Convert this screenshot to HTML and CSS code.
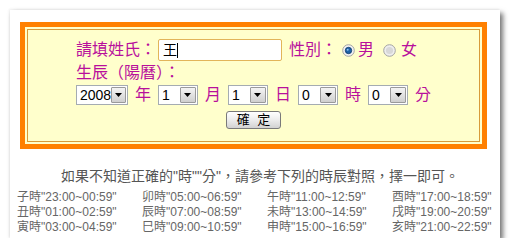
FILE: index.html
```html
<!DOCTYPE html>
<html lang="zh-Hant">
<head>
    <meta charset="UTF-8">
    <title>生辰查詢</title>
    <link rel="stylesheet" href="styles.css">
</head>
<body>

    <div class="card">

        <!-- Form Section -->
        <div class="frame">
            <div class="panel">
                <div class="form">
                    <div class="row">
                        <span class="lbl">請填姓氏：</span>
                        <span class="field">王<i class="caret"></i></span>
                        <span class="lbl sex">性別：</span>
                        <svg class="radio" width="13" height="13" viewBox="0 0 13 13">
                            <circle cx="6.5" cy="6.5" r="5.8" fill="#f2f2f2" stroke="#a3a3a3"/>
                            <circle cx="6.5" cy="6.5" r="3.2" fill="#1e62a8" stroke="#0b3665" stroke-width="0.8"/>
                            <circle cx="5.7" cy="5.7" r="1" fill="#8fc4f0"/>
                        </svg>
                        <span class="lbl opt">男</span>
                        <svg class="radio second" width="13" height="13" viewBox="0 0 13 13">
                            <circle cx="6.5" cy="6.5" r="5.8" fill="#eeeeee" stroke="#a3a3a3"/>
                            <circle cx="6.5" cy="6.5" r="3.6" fill="#d8d8d8"/>
                        </svg>
                        <span class="lbl opt">女</span>
                    </div>
                    <div class="row">生辰（陽曆）：</div>
                    <div class="row dates">
                        <span class="select w-year"><span class="val">2008</span><span class="drop"><svg width="7" height="4" viewBox="0 0 7 4"><path d="M0 0h7L3.5 4z" fill="#000"/></svg></span></span>
                        <span>年</span>
                        <span class="select"><span class="val">1</span><span class="drop"><svg width="7" height="4" viewBox="0 0 7 4"><path d="M0 0h7L3.5 4z" fill="#000"/></svg></span></span>
                        <span>月</span>
                        <span class="select"><span class="val">1</span><span class="drop"><svg width="7" height="4" viewBox="0 0 7 4"><path d="M0 0h7L3.5 4z" fill="#000"/></svg></span></span>
                        <span>日</span>
                        <span class="select"><span class="val">0</span><span class="drop"><svg width="7" height="4" viewBox="0 0 7 4"><path d="M0 0h7L3.5 4z" fill="#000"/></svg></span></span>
                        <span>時</span>
                        <span class="select"><span class="val">0</span><span class="drop"><svg width="7" height="4" viewBox="0 0 7 4"><path d="M0 0h7L3.5 4z" fill="#000"/></svg></span></span>
                        <span>分</span>
                    </div>
                    <div class="row submit">
                        <button class="ok-btn">確 定</button>
                    </div>
                </div>
            </div>
        </div>

        <p class="note">如果不知道正確的"時""分"，請參考下列的時辰對照，擇一即可。</p>

        <!-- Hours Table -->
        <div class="hours">
            <span>子時"23:00~00:59"</span>
            <span>卯時"05:00~06:59"</span>
            <span>午時"11:00~12:59"</span>
            <span>酉時"17:00~18:59"</span>
            <span>丑時"01:00~02:59"</span>
            <span>辰時"07:00~08:59"</span>
            <span>未時"13:00~14:59"</span>
            <span>戌時"19:00~20:59"</span>
            <span>寅時"03:00~04:59"</span>
            <span>巳時"09:00~10:59"</span>
            <span>申時"15:00~16:59"</span>
            <span>亥時"21:00~22:59"</span>
        </div>
    </div>

</body>
</html>
```

FILE: styles.css
```css
* {
    box-sizing: border-box;
}
body {
    margin: 0;
    background-color: #fff;
    font-family: "Liberation Sans", "Noto Sans CJK TC", sans-serif;
}
.card {
    margin: 10px 0 0 10px;
    width: 490px;
    height: 228px;
    overflow: hidden;
    background-color: #fff;
    box-shadow: 3px 3px 5px rgba(0, 0, 0, 0.55), -1px -1px 2px rgba(0, 0, 0, 0.06);
}
/* Orange frame */
.frame {
    margin: 12px 13px 0 10px;
    border: 5px solid #ff8000;
    padding: 2px;
    background-color: #ffffcc;
}
.panel {
    height: 113px;
    border: 1px solid #d79b3a;
    padding-top: 9px;
}
.form {
    width: fit-content;
    margin: 0 auto;
    color: #b8109c;
    font-size: 16px;
}
.row {
    display: flex;
    align-items: center;
    height: 20px;
    line-height: 20px;
    margin-top: 2px;
}
.row:first-child {
    height: 22px;
    margin-top: 0;
}
.field {
    display: inline-flex;
    align-items: center;
    width: 124px;
    height: 22px;
    margin-left: 2px;
    padding-left: 4px;
    background-color: #fff;
    border: 1px solid #e2b55a;
    border-radius: 2px;
    color: #000;
    font-size: 14px;
}
.caret {
    display: inline-block;
    width: 1px;
    height: 15px;
    background-color: #000;
}
.sex {
    margin-left: 7px;
}
.radio {
    margin-left: 5px;
}
.radio.second {
    margin-left: 9px;
}
.opt {
    margin-left: 3px;
}
.radio.second + .opt {
    margin-left: 5px;
}
/* Date selects */
.dates {
    gap: 7px;
}
.select {
    display: inline-flex;
    align-items: center;
    width: 40px;
    height: 20px;
    padding: 1px;
    background-color: #fff;
    border: 1px solid #a5acb2;
    color: #000;
    font-size: 14px;
}
.select.w-year {
    width: 52px;
}
.select .val {
    flex: 1;
    padding-left: 2px;
    line-height: 16px;
}
.drop {
    display: flex;
    align-items: center;
    justify-content: center;
    width: 16px;
    height: 16px;
    background: linear-gradient(#f4f4f4, #cfcfcf);
    border: 1px solid #9a9a9a;
    border-radius: 1px;
}
.submit {
    justify-content: center;
    margin-top: 5px;
}
.ok-btn {
    width: 55px;
    height: 18px;
    padding: 0 0 0 2px;
    border: 1px solid #7a7a7a;
    border-radius: 3px;
    background: linear-gradient(#ffffff, #ececec 50%, #d2d2d2);
    color: #000;
    font-family: "Liberation Sans", "Noto Sans CJK TC", sans-serif;
    font-size: 13px;
    line-height: 16px;
    letter-spacing: 2px;
}
/* Notes */
.note {
    margin: 17px 0 4px;
    padding-left: 10px;
    text-align: center;
    color: #555;
    font-size: 14px;
    line-height: 20px;
}
.hours {
    display: grid;
    grid-template-columns: 125px 125px 125px auto;
    padding-left: 7px;
    color: #666;
    font-size: 12px;
    line-height: 15px;
    white-space: nowrap;
}
```
